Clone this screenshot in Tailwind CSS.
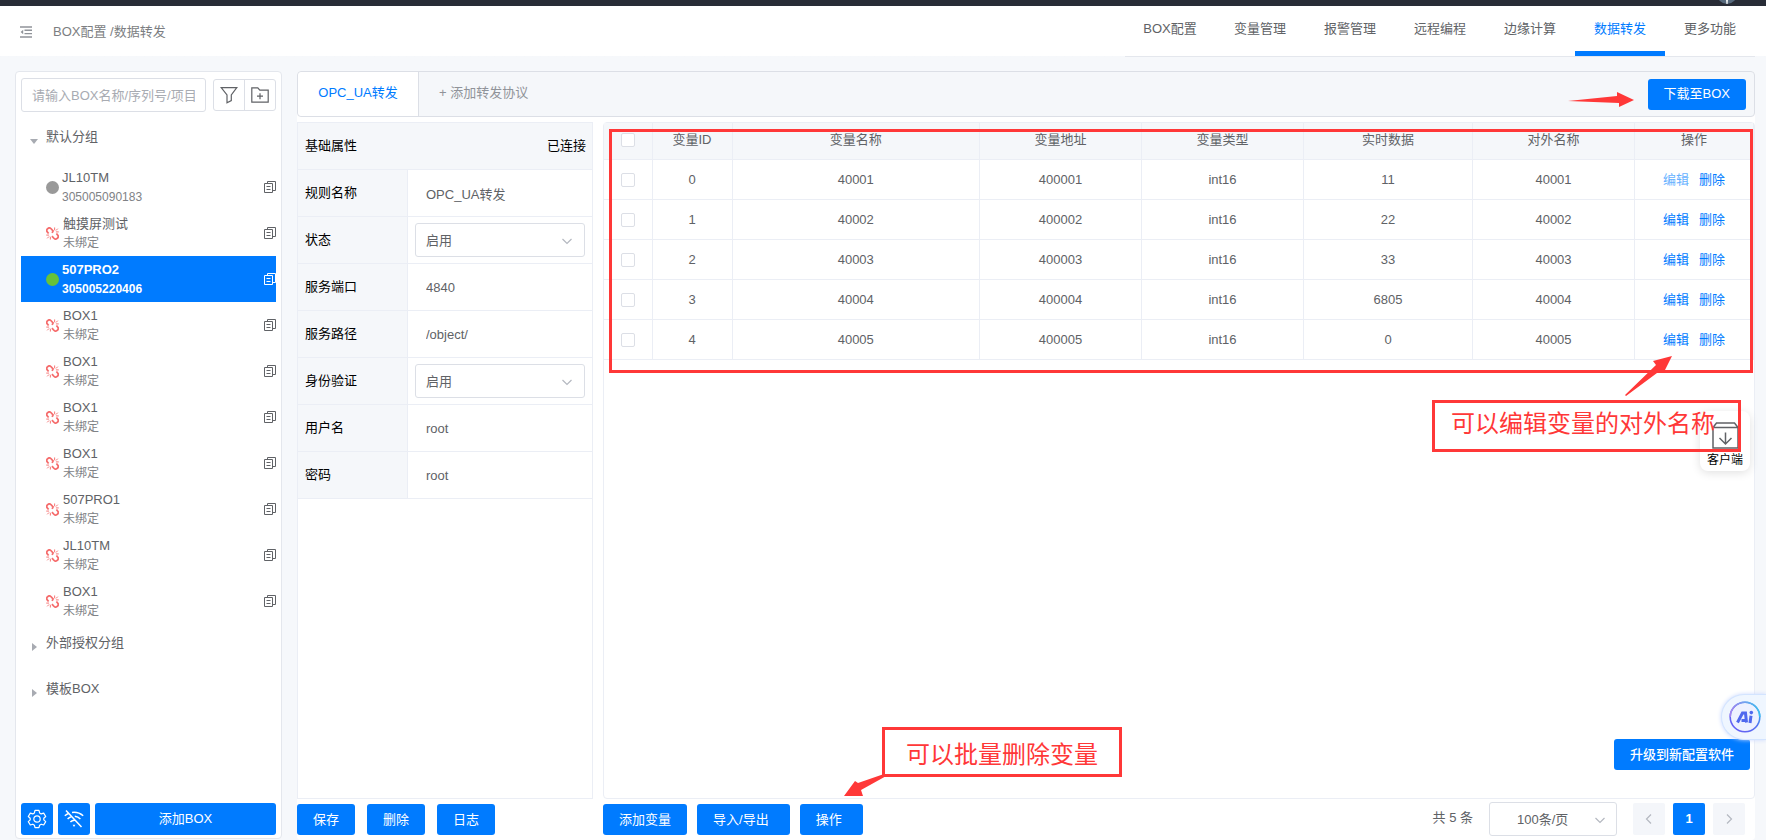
<!DOCTYPE html>
<html lang="zh-CN">
<head>
<meta charset="utf-8">
<meta name="viewport" content="width=device-width, initial-scale=1">
<title>BOX配置 / 数据转发</title>
<script src="https://cdn.jsdelivr.net/npm/@tailwindcss/browser@4"></script>
</head>
<body class="relative flex h-screen flex-col overflow-hidden bg-[#f6f8fb] font-['Liberation_Sans','Noto_Sans_CJK_SC',sans-serif] text-[13px] leading-5 text-[#606266]">

<svg class="hidden" aria-hidden="true">
  <symbol id="copy" viewBox="0 0 12 12" fill="none" stroke="currentColor"><path d="M3.500 3V.5h8v9H9M.5 2.500h8v9h-8zM2.500 5.500h4M2.500 8.500h4"/></symbol>
  <symbol id="unlink" viewBox="0 0 14 14" fill="none" stroke="#f56c6c"><path stroke-width="1.900" d="M2.800 7 1.600 5.600A2.400 2.400 0 0 1 2 1.700a2.500 2.500 0 0 1 3.500.2L7.600 4.200 6.600 6.400M11.200 7l1.200 1.400a2.400 2.400 0 0 1-.4 3.900 2.500 2.500 0 0 1-3.500-.2L6.400 9.800"/><path stroke-width="1" d="M9.300 3.500V.5M10.700 3.800l2-2M10.700 5.300h3M4.700 10.500v3M3.300 10.200l-2 2M3.300 8.700h-3"/></symbol>
  <symbol id="chevron" viewBox="0 0 12 12" fill="none" stroke="#b4b8c0" stroke-width="1.2"><path d="M1.500 4 6 8.500 10.500 4"/></symbol>
</svg>

<div class="relative h-1.5 shrink-0 overflow-hidden bg-[#282c36]">
  <svg class="absolute -top-4 right-[29px] size-5" viewBox="0 0 20 20"><circle cx="10" cy="10" r="10" fill="#56697c"/><path d="M8.500 10h3l-1 10h-1z" fill="#fff"/></svg>
</div>

<header class="flex h-[51px] shrink-0 items-stretch justify-between bg-linear-to-t from-[#f6f8fb] from-[1px] to-white to-[1px] pr-[11px]">
  <div class="flex items-center pl-5 text-[#7c7e82]">
    <button aria-label="收起菜单"><svg class="size-3" viewBox="0 0 12 12" fill="none" stroke="#909399" stroke-width="1.4"><path d="M0 1h12M4.500 4.300H12M4.500 7.600H12M0 11h12"/><path d="M3.200 3.800v4.400L.6 6z" fill="#909399" stroke="none"/></svg></button>
    <div class="ml-[21px]">BOX配置 /数据转发</div>
  </div>
  <nav class="grid grid-cols-[repeat(7,90px)] border-b border-[#e4e7ed] text-center leading-[45px]">
    <a href="#">BOX配置</a><a href="#">变量管理</a><a href="#">报警管理</a><a href="#">远程编程</a><a href="#">边缘计算</a><a href="#" class="border-b-[5px] border-[#007bff] text-[#007bff]">数据转发</a><a href="#">更多功能</a>
  </nav>
</header>

<div class="flex min-h-0 flex-1 gap-[15px] pt-3.5 pr-[11px] pl-[15px]">
  <aside class="mb-px flex w-[267px] shrink-0 flex-col rounded border border-[#e4e7ed] bg-white px-[5px] pt-1.5 pb-[3px]">
    <div class="flex items-center gap-[7px]">
      <input type="text" aria-label="搜索BOX" placeholder="请输入BOX名称/序列号/项目" class="h-[34px] min-w-0 flex-1 rounded-[3px] border border-[#dcdfe6] px-2.5 placeholder:text-[#a8abb2]">
      <div class="flex h-8 w-[63px] divide-x divide-[#dcdfe6] rounded-[3px] border border-[#dcdfe6] text-[#606266]">
        <button aria-label="筛选" class="flex flex-1 items-center justify-center"><svg class="size-[18px]" viewBox="0 0 18 18" fill="none" stroke="currentColor" stroke-width="1.2"><path d="M1.200 1.600h15.600L11.300 9v5.600L7 16.800V9z"/></svg></button>
        <button aria-label="新建分组" class="flex flex-1 items-center justify-center"><svg class="size-[18px]" viewBox="0 0 18 18" fill="none" stroke="currentColor" stroke-width="1.2"><path d="M.8 16.200V1.800h6l2 2.400h8.400v12zM6 10.200h6M9 7.200v6"/></svg></button>
      </div>
    </div>
    <button class="mt-1.5 flex h-[46px] items-center gap-2 pl-[9px] text-left"><svg class="size-2" viewBox="0 0 8 8" fill="#a8abb2"><path d="M0 2h8L4 7z"/></svg><span class="pb-2">默认分组</span></button>
    <ul id="devices"></ul>
    <button class="flex h-[46px] items-center gap-2 pl-[9px] text-left"><svg class="size-2" viewBox="0 0 8 8" fill="#a8abb2"><path d="M2 0v8l5-4z"/></svg><span class="pb-2">外部授权分组</span></button>
    <button class="flex h-[46px] items-center gap-2 pl-[9px] text-left"><svg class="size-2" viewBox="0 0 8 8" fill="#a8abb2"><path d="M2 0v8l5-4z"/></svg><span class="pb-2">模板BOX</span></button>
    <div class="mt-auto flex h-8 gap-[5px] text-white">
      <button aria-label="设置" class="flex w-8 items-center justify-center rounded-[3px] bg-[#007bff]"><svg class="size-5" viewBox="0 0 20 20" fill="none" stroke="currentColor" stroke-width="1.2" stroke-linejoin="round"><path d="M8 1.400h4l.6 2.500 1.600 1 2.500-.8 2 3.400-1.900 1.700v1.700l1.900 1.700-2 3.400-2.500-.8-1.600 1-.6 2.500H8l-.6-2.500-1.600-1-2.500.8-2-3.400 1.900-1.700V9.200L1.300 7.500l2-3.400 2.500.8 1.600-1z"/><circle cx="10" cy="10" r="3.2"/></svg></button>
      <button aria-label="离线" class="flex w-8 items-center justify-center rounded-[3px] bg-[#007bff]"><svg class="size-5" viewBox="0 0 20 20" fill="none" stroke="currentColor" stroke-width="1.5"><path d="M2 1.500 17.500 18M.8 6.800A14 14 0 0 1 5 4.200M8 3.400a14 14 0 0 1 11.200 3.400M3.600 10A10 10 0 0 1 7.400 7.600M10.800 7.200A10 10 0 0 1 16.400 10M6.400 13a6 6 0 0 1 4-1.800"/><path d="M8.600 15.800h2.800L10 18z" fill="currentColor" stroke="none"/></svg></button>
      <button class="flex-1 rounded-[3px] bg-[#007bff]">添加BOX</button>
    </div>
  </aside>

  <main class="flex min-w-0 flex-1 flex-col rounded bg-white">
    <div class="flex h-[46px] shrink-0 items-stretch rounded border border-[#dcdfe6] bg-[#f5f7fa]">
      <button class="w-[121px] rounded-l border-r border-[#dcdfe6] bg-white pb-0.5 text-[#007bff]">OPC_UA转发</button>
      <button class="px-5 pb-0.5 text-[#909399]">+ 添加转发协议</button>
      <button class="my-auto mr-2 ml-auto h-[31px] rounded-[3px] bg-[#007bff] px-4 text-white">下载至BOX</button>
    </div>

    <div class="mt-[5px] flex min-h-0 flex-1 gap-2.5">
      <section class="flex w-[296px] shrink-0 flex-col">
        <form class="flex-1 border border-[#ebeef5] text-black">
          <div class="flex h-[47px] items-center justify-between border-b border-[#ebeef5] bg-[#f5f7fa] pr-1.5 pb-px pl-[7px]"><span>基础属性</span><span>已连接</span></div>
          <div class="grid auto-rows-[47px] grid-cols-[110px_1fr] *:border-b *:border-[#ebeef5]">
            <label for="f1" class="border-r bg-[#f5f7fa] pl-[7px] leading-[45px]">规则名称</label>
            <div class="px-[7px] pt-1.5"><input id="f1" value="OPC_UA转发" class="h-[34px] w-full px-[11px] text-[#606266]"></div>
            <label for="f2" class="border-r bg-[#f5f7fa] pl-[7px] leading-[45px]">状态</label>
            <div class="relative px-[7px] pt-1.5"><select id="f2" class="h-[34px] w-full appearance-none rounded-[3px] border border-[#dcdfe6] px-2.5 pt-0.5 text-[#606266]"><option>启用</option></select><svg class="pointer-events-none absolute top-[18px] right-[19px] size-3"><use href="#chevron"/></svg></div>
            <label for="f3" class="border-r bg-[#f5f7fa] pl-[7px] leading-[45px]">服务端口</label>
            <div class="px-[7px] pt-1.5"><input id="f3" value="4840" class="h-[34px] w-full px-[11px] text-[#606266]"></div>
            <label for="f4" class="border-r bg-[#f5f7fa] pl-[7px] leading-[45px]">服务路径</label>
            <div class="px-[7px] pt-1.5"><input id="f4" value="/object/" class="h-[34px] w-full px-[11px] text-[#606266]"></div>
            <label for="f5" class="border-r bg-[#f5f7fa] pl-[7px] leading-[45px]">身份验证</label>
            <div class="relative px-[7px] pt-1.5"><select id="f5" class="h-[34px] w-full appearance-none rounded-[3px] border border-[#dcdfe6] px-2.5 pt-0.5 text-[#606266]"><option>启用</option></select><svg class="pointer-events-none absolute top-[18px] right-[19px] size-3"><use href="#chevron"/></svg></div>
            <label for="f6" class="border-r bg-[#f5f7fa] pl-[7px] leading-[45px]">用户名</label>
            <div class="px-[7px] pt-1.5"><input id="f6" value="root" class="h-[34px] w-full px-[11px] text-[#606266]"></div>
            <label for="f7" class="border-r bg-[#f5f7fa] pl-[7px] leading-[45px]">密码</label>
            <div class="px-[7px] pt-1.5"><input id="f7" value="root" class="h-[34px] w-full px-[11px] text-[#606266]"></div>
          </div>
        </form>
        <div class="flex h-[41px] items-start gap-3 pt-[5px] text-white">
          <button class="h-[31px] rounded-[3px] bg-[#007bff] px-4">保存</button>
          <button class="h-[31px] rounded-[3px] bg-[#007bff] px-4">删除</button>
          <button class="h-[31px] rounded-[3px] bg-[#007bff] px-4">日志</button>
        </div>
      </section>

      <section class="flex min-w-0 flex-1 flex-col">
        <div class="min-h-0 flex-1 rounded border border-[#ebeef5]">
          <table class="w-full table-fixed border-collapse text-center">
            <colgroup><col class="w-12"><col class="w-20"><col><col class="w-[162px]"><col class="w-[162px]"><col class="w-[169px]"><col class="w-[162px]"><col class="w-[119px]"></colgroup>
            <thead>
              <tr class="h-9 border-b border-[#ebeef5] bg-[#f5f7fa] *:border-r *:border-[#ebeef5] *:p-0 *:pb-px *:font-normal">
                <th><input type="checkbox" aria-label="全选" class="ml-[17px] block h-3.5 w-3.5 appearance-none rounded-[2px] border border-[#dcdfe6] bg-white"></th>
                <th>变量ID</th><th>变量名称</th><th>变量地址</th><th>变量类型</th><th>实时数据</th><th>对外名称</th><th>操作</th>
              </tr>
            </thead>
            <tbody id="vars"></tbody>
          </table>
        </div>
        <div class="flex h-[41px] items-start gap-2.5 pt-[5px] text-white">
          <button class="h-[31px] rounded-[3px] bg-[#007bff] px-4">添加变量</button>
          <button class="h-[31px] rounded-[3px] bg-[#007bff] pr-[21px] pl-4">导入/导出</button>
          <button class="h-[31px] rounded-[3px] bg-[#007bff] pr-[21px] pl-4">操作</button>
          <div class="-mt-0.5 mr-2.5 ml-auto flex items-center gap-2 text-[#606266]">
            <span class="mr-2 pb-0.5">共 5 条</span>
            <div class="relative mr-2"><select aria-label="每页条数" class="h-[34px] w-32 appearance-none rounded-[3px] border border-[#dcdfe6] pt-0.5 pl-[27px]"><option>100条/页</option></select><svg class="pointer-events-none absolute top-[12px] right-[11px] size-3"><use href="#chevron"/></svg></div>
            <button aria-label="上一页" class="flex size-8 items-center justify-center rounded-[2px] bg-[#f4f6fa]"><svg class="size-3 rotate-90"><use href="#chevron"/></svg></button>
            <button class="size-8 rounded-[2px] bg-[#007bff] font-bold text-white">1</button>
            <button aria-label="下一页" class="flex size-8 items-center justify-center rounded-[2px] bg-[#f4f6fa]"><svg class="size-3 -rotate-90"><use href="#chevron"/></svg></button>
          </div>
        </div>
      </section>
    </div>
  </main>
</div>

<!-- Floating widgets -->
<button class="absolute top-[739px] right-4 h-[31px] rounded-[3px] bg-[#007bff] px-4 font-medium text-white">升级到新配置软件</button>
<button aria-label="AI助手" class="absolute top-[694px] right-0 flex h-[46px] w-[45px] items-center rounded-l-full border border-r-0 border-[#d3e4ff] bg-[#eff6ff] pl-[7px] shadow-[0_0_4px_#c9d8ff]">
  <svg class="size-8 shrink-0" viewBox="0 0 32 32" fill="none"><defs><linearGradient id="ring" x1="0" y1="1" x2="1" y2="0"><stop offset="0" stop-color="#6a5cf5"/><stop offset=".55" stop-color="#5570f0"/><stop offset="1" stop-color="#2fc5ee"/></linearGradient><linearGradient id="ring2" x1="0" y1="0" x2="1" y2="0"><stop offset="0" stop-color="#a884ee"/><stop offset="1" stop-color="#3dbdee"/></linearGradient></defs><circle cx="16" cy="16" r="14.800" fill="#eef1ff" stroke="url(#ring)" stroke-width="1.600"/><path d="M1.200 16a14.800 14.800 0 0 1 29.600 0" stroke="url(#ring2)" stroke-width="1.600"/><path d="M8.500 21.500 13.500 12h3L17.500 21.500M12.500 19.500h4" stroke="#5068ee" stroke-width="3"/><path d="M22 14.800 21 22" stroke="#5068ee" stroke-width="3"/><circle cx="22.300" cy="11.600" r="1.800" fill="#5068ee"/></svg>
</button>
<button class="absolute top-[411px] right-4 flex h-[60px] w-[50px] flex-col items-center rounded-lg bg-white pt-[11px] text-xs leading-[22px] text-black shadow-[0_2px_10px_rgba(0,0,0,0.12)]">
  <svg class="size-[27px] shrink-0" viewBox="0 0 27 27" fill="none" stroke="#606266" stroke-width="1.500"><path d="M1 5.500h25V26H1zM1 5.500 4.500 1h18L26 5.500M13.500 10.500v11M7.500 16l6 6 6-6"/></svg>
  客户端
</button>

<!-- Tutorial annotations -->
<div class="pointer-events-none absolute top-[129px] right-[13px] left-[609px] h-[244px] border-3 border-[#ff3838]"></div>
<div class="pointer-events-none absolute top-[400px] right-[25px] h-[52px] w-[309px] border-3 border-[#ff3838] pl-4 text-2xl leading-[42px] whitespace-nowrap text-[#ff3838]">可以编辑变量的对外名称</div>
<div class="pointer-events-none absolute top-[727px] left-[882px] h-[50px] w-60 border-3 border-[#ff3838] text-center text-2xl leading-[50px] whitespace-nowrap text-[#ff3838]">可以批量删除变量</div>
<svg class="pointer-events-none absolute top-[91px] right-[132px] h-4 w-[66px]" viewBox="0 0 66 16" fill="#ff3838"><path d="M0 10 49 5V1l17 8-15 7v-4z"/></svg>
<svg class="pointer-events-none absolute top-[356px] right-[94px] h-10 w-[47px]" viewBox="0 0 47 40" fill="#ff3838"><path d="M0 39 31 9l-3-4L47 0 39 16l-7 1L1 40z"/></svg>
<svg class="pointer-events-none absolute top-[774px] left-[844px] h-[22px] w-[44px]" viewBox="0 0 44 22" fill="#ff3838"><path d="m0 22 11-15 3 2L40 0l4 1-27 15 2 6z"/></svg>

<script>
const devices = [['JL10TM','305005090183','off'],['触摸屏测试','未绑定'],['507PRO2','305005220406','on'],['BOX1','未绑定'],['BOX1','未绑定'],['BOX1','未绑定'],['BOX1','未绑定'],['507PRO1','未绑定'],['JL10TM','未绑定'],['BOX1','未绑定']];
const icon = s => s === 'off' ? '<span class="size-[13px] rounded-full bg-[#999]"></span>' : s === 'on' ? '<span class="size-[13px] rounded-full bg-[#67c23a]"></span>' : '<svg class="size-[13px]"><use href="#unlink"/></svg>';
document.getElementById('devices').innerHTML = devices.map(([n, id, s]) => `
  <li class="${s === 'on' ? 'flex h-[46px] items-center bg-[#007bff] pl-[25px] font-bold text-white' : 'flex h-[46px] items-center pl-[25px] text-[#606266]'}">
    ${icon(s)}
    <div class="${s ? 'ml-[3px] flex-1' : 'ml-1 flex-1'}"><div class="pt-0.5 leading-5">${n}</div><div class="${s === 'on' ? 'pb-0.5 text-xs leading-[18px]' : 'pb-0.5 text-xs leading-[18px] text-[#808286]'}">${id}</div></div>
    <button aria-label="复制 ${n}"><svg class="size-3"><use href="#copy"/></svg></button>
  </li>`).join('');
const values = [11, 22, 33, 6805, 0];
document.getElementById('vars').innerHTML = values.map((v, i) => `
  <tr class="h-10 border-b border-[#ebeef5] *:border-r *:border-[#ebeef5] *:p-0 *:pt-px">
    <td><input type="checkbox" aria-label="选择变量 ${i}" class="ml-[17px] block h-3.5 w-3.5 appearance-none rounded-[2px] border border-[#dcdfe6] bg-white"></td>
    <td>${i}</td><td>4000${i + 1}</td><td>40000${i + 1}</td><td>int16</td><td>${v}</td><td>4000${i + 1}</td>
    <td><a href="#" class="${i ? 'text-[#007bff]' : 'text-[#66b1ff]'}">编辑</a><a href="#" class="ml-2.5 text-[#007bff]">删除</a></td>
  </tr>`).join('');
</script>
</body>
</html>
